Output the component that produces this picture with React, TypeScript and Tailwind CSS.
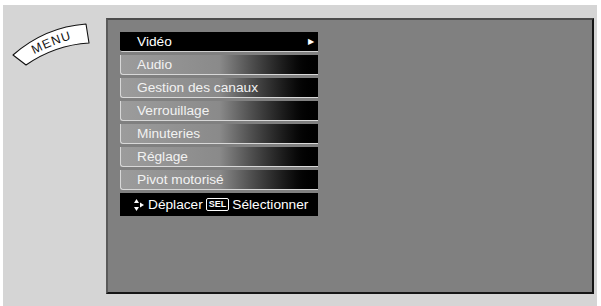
import React from "react";

const items = [
  "Audio",
  "Gestion des canaux",
  "Verrouillage",
  "Minuteries",
  "Réglage",
  "Pivot motorisé",
];

function MenuBadge() {
  return (
    <svg width="100" height="60" viewBox="0 0 100 60" className="block">
      <path
        d="M3 35 Q35 7 76 4 L79 23 Q45 25 16 45 Z"
        fill="#fff"
        stroke="#111"
        strokeWidth="1.1"
        strokeLinejoin="round"
      />
      <path id="menuArc" d="M9 43 Q40 23 79 15" fill="none" />
      <text
        fontFamily="'Liberation Sans', Arial, sans-serif"
        fontSize="12.5"
        letterSpacing="1"
        fill="#111"
      >
        <textPath href="#menuArc" startOffset="50%" textAnchor="middle">
          MENU
        </textPath>
      </text>
    </svg>
  );
}

export default function App() {
  return (
    <div className="w-[601px] h-[306px] bg-white pt-[5px] pl-[3px] font-['Liberation_Sans',Arial,sans-serif]">
      <div className="w-[594px] h-[301px] bg-[#d5d5d5] flex">
        {/* left side - MENU label */}
        <div className="w-[103px] pt-[15px] pl-[7px]">
          <MenuBadge />
        </div>

        {/* TV screen */}
        <div className="mt-[13px] w-[488px] h-[276px] bg-[#808080] border-t-2 border-l-2 border-t-[#4c4c4c] border-l-[#5a5a5a] border-r-2 border-b-2 border-r-[#151515] border-b-[#151515] pt-[12px] pl-[12px]">
          <div className="w-[198px] flex flex-col text-[13.7px] leading-none text-white">
            <div className="h-[20px] mb-[3px] bg-black border-b border-[#cfcfcf] rounded-bl-[2px] flex items-center pl-[17px] pr-[4px]">
              <span className="flex-1">Vidéo</span>
              <span className="text-[8px]">▶</span>
            </div>
            {items.map((label) => (
              <div
                key={label}
                className="h-[20px] mb-[3px] bg-gradient-to-r from-[#9c9c9c] via-[#8a8a8a] via-50% to-black border-b border-l border-[#d8d8d8] rounded-bl-[3px] flex items-center pl-[16px] text-[#f2f2f2]"
              >
                {label}
              </div>
            ))}
            <div className="h-[23px] bg-black flex items-center pl-[13px] gap-[3px]">
              <svg width="12" height="14" viewBox="0 0 12 14" className="shrink-0">
                <path d="M1 5 L3.5 1 L6 5 Z" fill="#fff" />
                <path d="M1 9 L3.5 13 L6 9 Z" fill="#fff" />
                <path d="M7 4.5 L11 7 L7 9.5 Z" fill="#fff" />
              </svg>
              <span>Déplacer</span>
              <span className="border border-white rounded-[2px] px-[2px] text-[9px] font-bold leading-[11px]">
                SEL
              </span>
              <span>Sélectionner</span>
            </div>
          </div>
        </div>
      </div>
    </div>
  );
}
